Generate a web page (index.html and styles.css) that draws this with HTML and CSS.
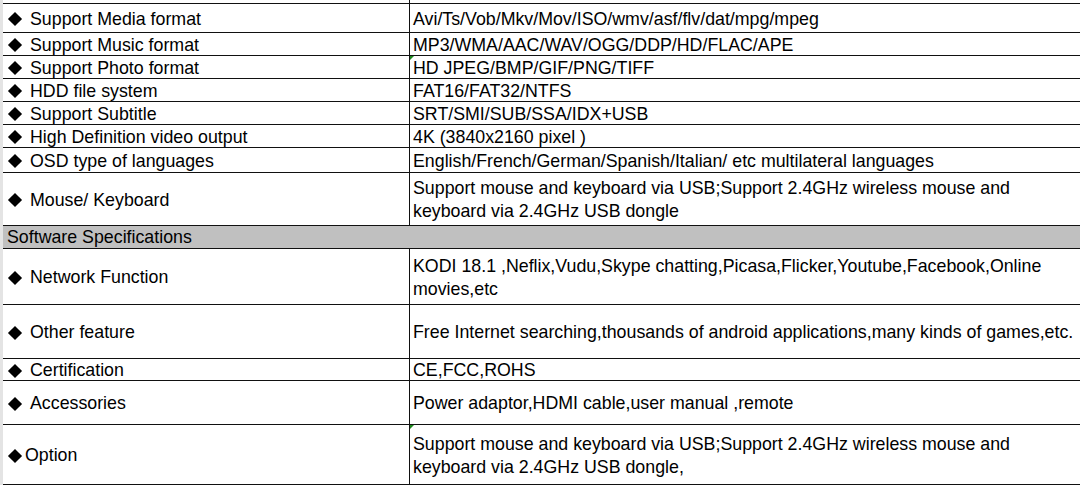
FILE: index.html
```html
<!DOCTYPE html>
<html>
<head>
<meta charset="utf-8">
<link rel="stylesheet" href="styles.css">
</head>
<body>
<div class="sheet">
  <div class="row r-top"><div class="c-left"></div><div class="c-right"></div></div>
  <div class="row h29"><div class="c-left"><span class="dia"></span>Support Media format</div><div class="c-right">Avi/Ts/Vob/Mkv/Mov/ISO/wmv/asf/flv/dat/mpg/mpeg</div></div>
  <div class="row h23"><div class="c-left"><span class="dia"></span>Support Music format</div><div class="c-right">MP3/WMA/AAC/WAV/OGG/DDP/HD/FLAC/APE</div></div>
  <div class="row h23"><div class="c-left"><span class="dia"></span>Support Photo format</div><div class="c-right flag">HD JPEG/BMP/GIF/PNG/TIFF</div></div>
  <div class="row h23"><div class="c-left"><span class="dia"></span>HDD file system</div><div class="c-right">FAT16/FAT32/NTFS</div></div>
  <div class="row h23"><div class="c-left"><span class="dia"></span>Support Subtitle</div><div class="c-right">SRT/SMI/SUB/SSA/IDX+USB</div></div>
  <div class="row h23"><div class="c-left"><span class="dia"></span>High Definition video output</div><div class="c-right">4K (3840x2160 pixel )</div></div>
  <div class="row h25"><div class="c-left"><span class="dia"></span>OSD type of languages</div><div class="c-right">English/French/German/Spanish/Italian/ etc multilateral languages</div></div>
  <div class="row h53"><div class="c-left"><span class="dia"></span>Mouse/ Keyboard</div><div class="c-right">Support mouse and keyboard via USB;Support 2.4GHz wireless mouse and<br>keyboard via 2.4GHz USB dongle</div></div>
  <div class="row h23 section"><div class="c-full">Software Specifications</div></div>
  <div class="row h56"><div class="c-left"><span class="dia"></span>Network Function</div><div class="c-right">KODI 18.1 ,Neflix,Vudu,Skype chatting,Picasa,Flicker,Youtube,Facebook,Online<br>movies,etc</div></div>
  <div class="row h54"><div class="c-left"><span class="dia"></span>Other feature</div><div class="c-right">Free Internet searching,thousands of android applications,many kinds of games,etc.</div></div>
  <div class="row h22"><div class="c-left"><span class="dia"></span>Certification</div><div class="c-right">CE,FCC,ROHS</div></div>
  <div class="row h44"><div class="c-left"><span class="dia"></span>Accessories</div><div class="c-right">Power adaptor,HDMI cable,user manual ,remote</div></div>
  <div class="row h60 last"><div class="c-left tight"><span class="dia"></span>Option</div><div class="c-right flag">Support mouse and keyboard via USB;Support 2.4GHz wireless mouse and<br>keyboard via 2.4GHz USB dongle,</div></div>
</div>
</body>
</html>
```
FILE: styles.css
```css
html, body {
  margin: 0;
  padding: 0;
  background: #ffffff;
}
body {
  width: 1080px;
  height: 485px;
  overflow: hidden;
  font-family: "Liberation Sans", Arial, sans-serif;
  color: #000;
}
.sheet {
  display: flex;
  flex-direction: column;
  border-left: 3px solid #e4e4e4;
  width: 1077px;
}
.row {
  display: flex;
  border-top: 1px solid #111;
  box-sizing: border-box;
}
.r-top { border-top: none; height: 3px; }
.r-top .c-left, .r-top .c-right { padding-top: 0; }
.last { border-bottom: 1px solid #111; }
.h22 { height: 22px; }
.h23 { height: 23px; }
.h25 { height: 25px; }
.h29 { height: 29px; }
.h44 { height: 44px; }
.h53 { height: 53px; }
.h54 { height: 54px; }
.h56 { height: 56px; }
.h60 { height: 61px; }
.c-left {
  width: 407px;
  border-right: 1px solid #111;
  display: flex;
  align-items: center;
  padding-left: 5px;
  padding-top: 2px;
  box-sizing: border-box;
  font-size: 17.8px;
  white-space: nowrap;
}
.c-right {
  flex: 1;
  display: flex;
  align-items: center;
  padding-left: 3px;
  padding-top: 2px;
  box-sizing: border-box;
  font-size: 17.8px;
  line-height: 23px;
  white-space: nowrap;
  position: relative;
}
.c-full {
  flex: 1;
  display: flex;
  align-items: center;
  padding-left: 4px;
  font-size: 17.8px;
}
.section { background: #c0c0c0; }
.dia {
  display: inline-block;
  flex: none;
  width: 10px;
  height: 10px;
  background: #000;
  transform: rotate(45deg);
  margin-left: 2px;
  margin-right: 10px;
}
.tight .dia { margin-right: 5px; }
.flag::before {
  content: "";
  position: absolute;
  left: 0;
  top: 0;
  border-top: 4px solid #1f8a1f;
  border-right: 4px solid transparent;
}
```
